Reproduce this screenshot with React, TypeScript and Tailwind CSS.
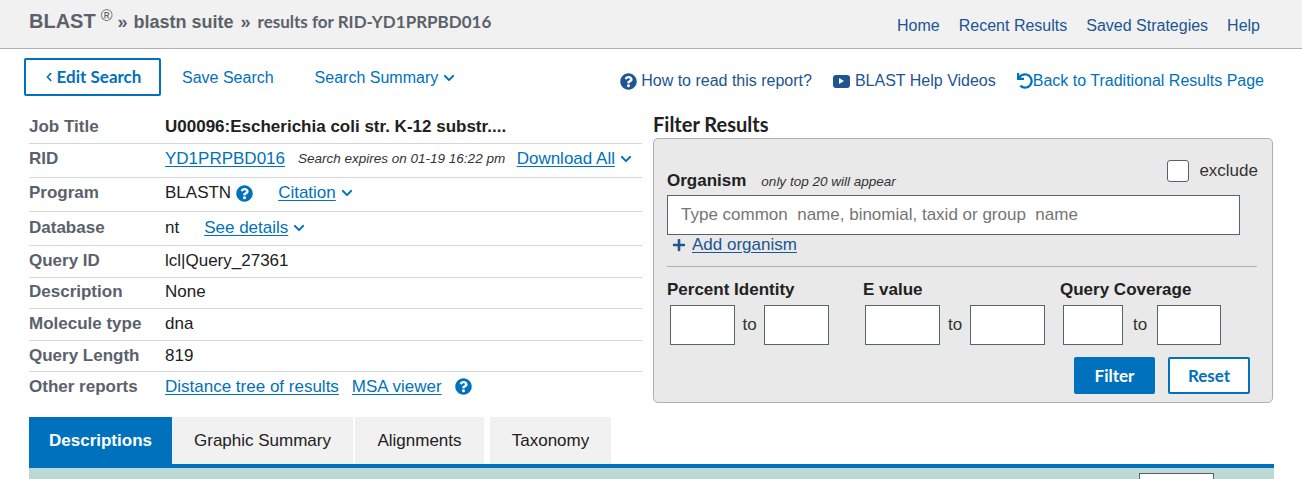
import { FaChevronDown, FaChevronLeft, FaPlus, FaQuestionCircle, FaUndo } from 'react-icons/fa';

const Chevron = () => <FaChevronDown className="ml-[5px] size-[12px] shrink-0 text-[#0071bc]" />;

const linkClass = 'text-[#0071bc] underline underline-offset-2';

const SmallField = ({ width }: { width: string }) => (
  <div className={`h-[40px] border border-[#5b616b] bg-white ${width}`}></div>
);

const RangeField = ({
  label,
  className,
  first,
  second,
  gap,
  indent,
}: {
  label: string;
  className: string;
  first: string;
  second: string;
  gap: string;
  indent: string;
}) => (
  <div className={className}>
    <div className="text-[17px] font-bold leading-[20px] text-[#212121]">{label}</div>
    <div className={`mt-[5px] flex items-center ${indent}`}>
      <SmallField width={first} />
      <span className={`text-center text-[17px] text-[#333] ${gap}`}>to</span>
      <SmallField width={second} />
    </div>
  </div>
);

const InfoRow = ({
  label,
  height,
  nudge = '',
  last,
  children,
}: {
  label: string;
  height: string;
  nudge?: string;
  last?: boolean;
  children: React.ReactNode;
}) => (
  <div
    className={`flex items-center text-[17px] ${height} ${nudge} ${
      last ? '' : 'border-b border-[#d6d7d9]'
    }`}
  >
    <div className="w-[136px] shrink-0 font-bold text-[#5b616b]">{label}</div>
    <div className="flex min-w-0 flex-1 items-center whitespace-nowrap text-[#212121]">
      {children}
    </div>
  </div>
);

export default function App() {
  return (
    <div className="h-[479px] overflow-hidden bg-white font-['Liberation_Sans',Arial,sans-serif] text-[16px] leading-[20px]">
      {/* Top bar */}
      <header className="flex h-[49px] items-center justify-between border-b border-[#aeb0b5] bg-[#f1f1f1] pl-[29px] pr-[42px]">
        <div className="mb-[4px] flex items-baseline font-bold text-[#5b616b]">
          <span className="text-[20px]">BLAST</span>
          <span className="relative top-[-7px] ml-[5px] text-[16px] font-normal">®</span>
          <span className="ml-[5px] text-[18px]">»</span>
          <span className="ml-[6px] text-[18px]">blastn suite</span>
          <span className="ml-[7px] text-[18px]">»</span>
          <span className="ml-[7px] font-[Lato,sans-serif] text-[17px]">results for RID-YD1PRPBD016</span>
        </div>
        <nav className="mt-[3px] flex gap-[19px] text-[#205493]">
          <span>Home</span>
          <span>Recent Results</span>
          <span>Saved Strategies</span>
          <span>Help</span>
        </nav>
      </header>

      {/* Actions */}
      <div className="mt-[9px] flex justify-between pl-[24px] pr-[38px]">
        <div className="flex items-center">
          <div className="flex h-[38px] w-[137px] items-center justify-center rounded-[2px] border-2 border-[#0071bc] font-[Lato,sans-serif] text-[17px] font-bold text-[#0071bc]">
            <FaChevronLeft className="mr-[3px] size-[10px]" />
            Edit Search
          </div>
          <span className="ml-[21px] mt-[2px] text-[#0071bc]">Save Search</span>
          <span className="ml-[41px] mt-[2px] flex items-center text-[#0071bc]">
            Search Summary
            <Chevron />
          </span>
        </div>
        <div className="mt-[13px] flex items-center self-start">
          <FaQuestionCircle className="size-[17px] text-[#205493]" />
          <span className="ml-[4px] text-[#205493]">How to read this report?</span>
          <span className="ml-[21px] flex h-[13px] w-[17px] items-center justify-center rounded-[3px] bg-[#205493]">
            <span className="ml-[1px] border-y-[3px] border-l-[5px] border-y-transparent border-l-white"></span>
          </span>
          <span className="ml-[5px] text-[#205493]">BLAST Help Videos</span>
          <FaUndo className="ml-[21px] size-[16px] text-[#0071bc]" />
          <span className="text-[#0071bc]">Back to Traditional Results Page</span>
        </div>
      </div>

      {/* Summary and filter */}
      <div className="mt-[6px] flex items-start pl-[29px]">
        <div className="w-[613px] shrink-0 pt-[7px]">
          <InfoRow label="Job Title" height="h-[35px]" nudge="pt-[2px]">
            <span className="font-bold">U00096:Escherichia coli str. K-12 substr....</span>
          </InfoRow>
          <InfoRow label="RID" height="h-[34px]" nudge="pb-[3px]">
            <span className={linkClass}>YD1PRPBD016</span>
            <span className="ml-[13px] text-[13.5px] italic text-[#333]">
              Search expires on 01-19 16:22 pm
            </span>
            <span className={`ml-[11.5px] ${linkClass}`}>Download All</span>
            <Chevron />
          </InfoRow>
          <InfoRow label="Program" height="h-[34px]" nudge="pb-[3px]">
            BLASTN
            <FaQuestionCircle className="ml-[5px] size-[17px] text-[#0071bc]" />
            <span className={`ml-[25px] ${linkClass}`}>Citation</span>
            <Chevron />
          </InfoRow>
          <InfoRow label="Database" height="h-[34px]" nudge="pb-[2px]">
            nt
            <span className={`ml-[25px] ${linkClass}`}>See details</span>
            <Chevron />
          </InfoRow>
          <InfoRow label="Query ID" height="h-[32px]" nudge="pb-[2px]">
            lcl|Query_27361
          </InfoRow>
          <InfoRow label="Description" height="h-[31px]" nudge="pb-[2px]">
            None
          </InfoRow>
          <InfoRow label="Molecule type" height="h-[32px]" nudge="pb-[2px]">
            dna
          </InfoRow>
          <InfoRow label="Query Length" height="h-[31px]">
            819
          </InfoRow>
          <InfoRow label="Other reports" height="h-[31px]" nudge="pb-[2px]" last>
            <span className={linkClass}>Distance tree of results</span>
            <span className={`ml-[13px] ${linkClass}`}>MSA viewer</span>
            <FaQuestionCircle className="ml-[13px] size-[17px] text-[#0071bc]" />
          </InfoRow>
        </div>

        <div className="ml-[11px] w-[620px] shrink-0 pt-[10px]">
          <h3 className="font-[Lato,sans-serif] text-[20px] font-bold leading-[24px] text-[#212121]">
            Filter Results
          </h3>
          <div className="mt-[2px] h-[265px] rounded-[5px] border border-[#aeb0b5] bg-[#e9e9e9] pl-[13px] pr-[15px]">
            <div className="relative pt-[26px]">
              <div className="flex items-baseline pt-[6px]">
                <span className="text-[17px] font-bold text-[#212121]">Organism</span>
                <span className="ml-[15px] text-[13.5px] italic text-[#333]">
                  only top 20 will appear
                </span>
              </div>
              <div className="absolute right-[-1px] top-[21px] flex items-center text-[17px]">
                <span className="h-[22px] w-[22px] rounded-[3px] border border-[#5b616b] bg-white"></span>
                <span className="ml-[10px] text-[#333]">exclude</span>
              </div>
            </div>
            <div className="mt-[3px] flex h-[40px] w-[573px] items-center border border-[#5b616b] bg-white pl-[13px] text-[17px] text-[#757575]">
              Type common&nbsp; name, binomial, taxid or group&nbsp; name
            </div>
            <div className="ml-[5px] flex h-[20px] items-center text-[17px] text-[#205493]">
              <FaPlus className="size-[14px]" />
              <span className="ml-[6px] underline underline-offset-2">Add organism</span>
            </div>
            <div className="mt-[11px] border-t border-[#aeb0b5]"></div>
            <div className="mt-[13px] flex">
              <RangeField
                label="Percent Identity"
                className="w-[196px]"
                indent="ml-[3px]"
                first="w-[65px]"
                second="w-[65px]"
                gap="w-[29px]"
              />
              <RangeField
                label="E value"
                className="w-[197px]"
                indent="ml-[2px]"
                first="w-[75px]"
                second="w-[75px]"
                gap="w-[30px]"
              />
              <RangeField
                label="Query Coverage"
                className="w-[190px]"
                indent="ml-[3px]"
                first="w-[60px]"
                second="w-[64px]"
                gap="w-[34px]"
              />
            </div>
            <div className="mt-[12px] flex justify-end gap-[13px] pr-[7px] font-[Lato,sans-serif] text-[17px] font-bold">
              <div className="flex h-[37px] w-[81px] items-center justify-center rounded-[2px] bg-[#0071bc] text-white">
                Filter
              </div>
              <div className="flex h-[37px] w-[82px] items-center justify-center rounded-[2px] border-2 border-[#0071bc] bg-white text-[#0071bc]">
                Reset
              </div>
            </div>
          </div>
        </div>
      </div>

      {/* Tabs */}
      <div className="ml-[29px] mt-[14px] w-[1245px] text-[17px]">
        <div className="flex h-[47px]">
          <div className="flex w-[143px] items-center justify-center bg-[#0071bc] font-bold text-white">
            Descriptions
          </div>
          <div className="flex w-[181px] items-center justify-center bg-[#f1f1f1] text-[#212121]">
            Graphic Summary
          </div>
          <div className="ml-[2px] flex w-[129px] items-center justify-center bg-[#f1f1f1] text-[#212121]">
            Alignments
          </div>
          <div className="ml-[6px] flex w-[121px] items-center justify-center bg-[#f1f1f1] text-[#212121]">
            Taxonomy
          </div>
        </div>
        <div className="h-[4px] bg-[#0071bc]"></div>
        <div className="flex h-[40px] justify-end bg-[#bcd9d5] pr-[60px] pt-[5px]">
          <div className="h-[40px] w-[75px] border border-[#5b616b] bg-white"></div>
        </div>
      </div>
    </div>
  );
}
